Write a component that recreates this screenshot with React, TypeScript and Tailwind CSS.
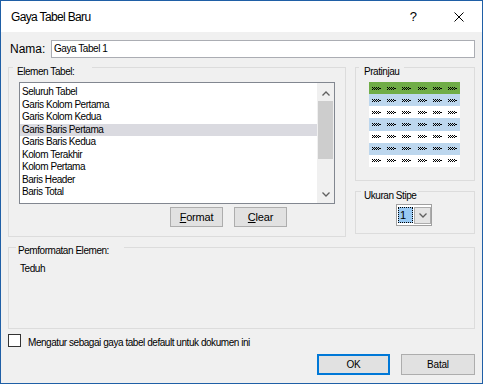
import React from 'react';

const items = [
  'Seluruh Tabel',
  'Garis Kolom Pertama',
  'Garis Kolom Kedua',
  'Garis Baris Pertama',
  'Garis Baris Kedua',
  'Kolom Terakhir',
  'Kolom Pertama',
  'Baris Header',
  'Baris Total',
];

const rowColors = ['bg-[#70ad47]', 'bg-[#bdd7ee]', 'bg-white', 'bg-[#bdd7ee]', 'bg-white', 'bg-[#bdd7ee]', 'bg-white'];

type GroupProps = {
  label: string;
  className?: string;
  labelClass?: string;
  children?: React.ReactNode;
};

const GroupBox: React.FC<GroupProps> = ({ label, className = '', labelClass = '', children }) => (
  <div className={`border border-[#dcdcdc] ${className}`}>
    <div className={`w-fit bg-[#f0f0f0] leading-[11px] ${labelClass}`}>{label}</div>
    {children}
  </div>
);

const Squiggle = () => (
  <svg width="9" height="3" viewBox="0 0 9 3" shapeRendering="crispEdges">
    <path d="M0 0h1v1H0zM2 0h1v1H2zM4 0h1v1H4zM6 0h1v1H6zM1 1h1v1H1zM3 1h1v1H3zM5 1h1v1H5zM7 1h2v1H7zM0 2h1v1H0zM2 2h1v1H2zM4 2h1v1H4zM6 2h1v1H6z" fill="#000" />
  </svg>
);

const Chevron = ({ down = false }: { down?: boolean }) => (
  <svg width="8" height="5" viewBox="0 0 8 5">
    <polyline
      points={down ? '0.5,0.5 4,4 7.5,0.5' : '0.5,4.5 4,1 7.5,4.5'}
      fill="none"
      stroke="#606060"
      strokeWidth="1.3"
    />
  </svg>
);

export default function App() {
  return (
    <div className="w-[483px] h-[384px] border border-[#1f5fa6] bg-[#f0f0f0] flex flex-col overflow-hidden text-black font-['Liberation_Sans',Arial,sans-serif] text-[10px] tracking-[-0.45px]">
      {/* title bar */}
      <div className="h-[31px] shrink-0 bg-white flex items-center">
        <span className="ml-[10px] text-[12px] tracking-[-0.65px]">Gaya Tabel Baru</span>
        <span className="ml-auto text-[13px] tracking-normal leading-none">?</span>
        <svg className="ml-[37px] mr-[18px]" width="10" height="10" viewBox="0 0 10 10">
          <path d="M0.5 0.5L9.5 9.5M9.5 0.5L0.5 9.5" stroke="#000" strokeWidth="1" />
        </svg>
      </div>

      <div className="flex flex-col px-[7px] pt-[8px]">
        {/* name */}
        <div className="flex items-center h-[18px]">
          <span className="w-[43px] pl-[2px] text-[12px] tracking-normal">Nama:</span>
          <div className="flex-1 h-[18px] border border-[#abadb3] bg-white pl-[2px] leading-[16px]">Gaya Tabel 1</div>
        </div>

        <div className="flex gap-[9px] mt-[9px]">
          {/* elements */}
          <GroupBox label="Elemen Tabel:" className="w-[338px] h-[170px]" labelClass="-mt-[2px] ml-[4px] pl-[4px] pr-[18px]">
            <div className="mt-[5px] ml-[10px] w-[316px] h-[122px] border border-[#828790] bg-white flex">
              <div className="flex-1 pt-[3px]">
                {items.map((it) => (
                  <div
                    key={it}
                    className={`h-[12.5px] leading-[12.5px] pl-[2px] ${it === 'Garis Baris Pertama' ? 'bg-[#dadae0]' : ''}`}
                  >
                    {it}
                  </div>
                ))}
              </div>
              <div className="w-[17px] bg-[#f0f0f0] flex flex-col">
                <div className="h-[17px] flex items-center justify-center pt-[3px]">
                  <Chevron />
                </div>
                <div className="mt-[1px] mx-[1px] h-[58px] bg-[#cdcdcd]" />
                <div className="mt-auto h-[17px] flex items-center justify-center">
                  <Chevron down />
                </div>
              </div>
            </div>
            <div className="flex gap-[11px] mt-[3px] pl-[161px] text-[11px] tracking-[-0.2px]">
              <button className="w-[53px] h-[20px] border border-[#adadad] bg-[#e1e1e1] leading-[18px]">
                <span className="underline">F</span>ormat
              </button>
              <button className="w-[53px] h-[20px] border border-[#adadad] bg-[#e1e1e1] leading-[18px]">
                <span className="underline">C</span>lear
              </button>
            </div>
          </GroupBox>

          {/* right column */}
          <div className="w-[120px] flex flex-col gap-[10px]">
            <GroupBox label="Pratinjau" className="h-[114px]" labelClass="-mt-[2px] ml-[3px] px-[5px]">
              <div className="mt-[5px] ml-[13px] w-[91px] h-[85px] grid grid-rows-7">
                {rowColors.map((c, r) => (
                  <div key={r} className={`grid grid-cols-6 place-items-center ${c}`}>
                    {Array.from({ length: 6 }).map((_, i) => (
                      <Squiggle key={i} />
                    ))}
                  </div>
                ))}
              </div>
            </GroupBox>
            <GroupBox label="Ukuran Stipe" className="h-[43px]" labelClass="-mt-[2px] ml-[5px] pl-[3px] pr-[2px]">
              <div className="mt-[3px] ml-[40px] w-[36px] h-[22px] border border-[#a0a0a0] bg-white flex items-center gap-[1px] pl-[1px]">
                <div className="w-[15px] h-[16px] bg-[#99c9f3] border border-dotted border-black text-[11px] tracking-normal leading-[14px] pl-[1px]">
                  1
                </div>
                <div className="w-[17px] h-[17px] border border-[#acacac] bg-[#e5e5e5] flex items-center justify-center">
                  <Chevron down />
                </div>
              </div>
            </GroupBox>
          </div>
        </div>

        {/* element formatting */}
        <GroupBox label="Pemformatan Elemen:" className="h-[82px] mt-[10px]" labelClass="-mt-[3px] ml-[7px] pl-[2px] pr-[15px]">
          <div className="mt-[7px] ml-[11px] leading-[12px]">Teduh</div>
        </GroupBox>

        {/* default checkbox */}
        <div className="flex items-start h-[15px] mt-[5px]">
          <div className="w-[13px] h-[13px] border border-[#333333] bg-white" />
          <span className="ml-[7px] mt-[2px] leading-[13px]">Mengatur sebagai gaya tabel default untuk dokumen ini</span>
        </div>

        {/* dialog buttons */}
        <div className="flex justify-end gap-[11px] mt-[5px] tracking-[-0.2px]">
          <button className="w-[73px] h-[21px] border-2 border-[#0078d7] bg-[#e1e1e1] leading-[17px]">OK</button>
          <button className="w-[74px] h-[21px] border border-[#adadad] bg-[#e1e1e1] leading-[19px]">Batal</button>
        </div>
      </div>
    </div>
  );
}
